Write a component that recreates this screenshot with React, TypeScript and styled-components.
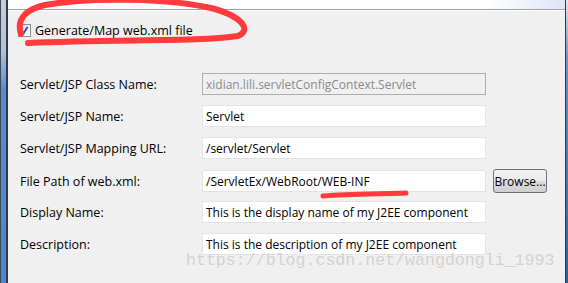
import styled, { createGlobalStyle } from "styled-components";

const Global = createGlobalStyle`
  html, body { margin: 0; padding: 0; background: #f0f0f0; }
  body { width: 568px; height: 283px; overflow: hidden; }
`;

const rows = [
  { label: "Servlet/JSP Class Name:", value: "xidian.lili.servletConfigContext.Servlet", disabled: true },
  { label: "Servlet/JSP Name:", value: "Servlet" },
  { label: "Servlet/JSP Mapping URL:", value: "/servlet/Servlet" },
  { label: "File Path of web.xml:", value: "/ServletEx/WebRoot/WEB-INF", browse: true },
  { label: "Display Name:", value: "This is the display name of my J2EE component" },
  { label: "Description:", value: "This is the description of my J2EE component" },
];

export default function App() {
  return (
    <Window>
      <Global />
      <LeftFrame />
      <Content>
        <TopBand />
        <Panel>
          <CheckRow>
            <CheckBox>
              <svg width="9" height="9" viewBox="0 0 9 9">
                <path d="M1.5 4.5 L3.5 7.5 L7.5 1" stroke="#2b4fa8" strokeWidth="1.8" fill="none" />
              </svg>
            </CheckBox>
            <span>Generate/Map web.xml file</span>
          </CheckRow>
          <Form>
            {rows.map((r) => (
              <Row key={r.label}>
                <Label>{r.label}</Label>
                <Field $disabled={r.disabled}>{r.value}</Field>
                {r.browse ? <Button>Browse...</Button> : <span />}
              </Row>
            ))}
          </Form>
        </Panel>
      </Content>
      <RightFrame />
      <Marks width="568" height="283" viewBox="0 0 568 283">
        <path
          d="M21 34 C17 22 22 10 45 5 C90 -3 170 -2 215 9 C242 17 252 30 238 36 C200 42 120 39 28 43"
          stroke="#ff3b3b"
          strokeWidth="6"
          strokeLinecap="round"
          fill="none"
        />
        <path d="M323 196 C350 194 380 194 406 193" stroke="#ff3b3b" strokeWidth="5" strokeLinecap="round" fill="none" />
      </Marks>
      <Watermark>https://blog.csdn.net/wangdongli_1993</Watermark>
    </Window>
  );
}

const Window = styled.div`
  position: relative;
  display: flex;
  width: 568px;
  height: 283px;
  font-family: "Open Sans", "Noto Sans", sans-serif;
  font-size: 12px;
  color: #000;
`;

const LeftFrame = styled.div`
  width: 8px;
  flex: none;
  box-sizing: border-box;
  border-left: 1px solid #3c4a5e;
  border-right: 2px solid #2a3a52;
  background: linear-gradient(180deg, #c9cdd3 0px, #b8c2cf 50px, #5a8ccb 90px, #4f86c9 283px);
`;

const RightFrame = styled.div`
  width: 3px;
  flex: none;
  box-sizing: border-box;
  border-left: 1px solid #303a48;
  background: linear-gradient(180deg, #dfe6f3 0px, #6b93c6 60px, #2d5f9e 283px);
`;

const Content = styled.div`
  flex: 1;
  min-width: 0;
  display: flex;
  flex-direction: column;
  background: #f0f0f0;
`;

const TopBand = styled.div`
  height: 9px;
  flex: none;
  border-bottom: 1px solid #a0a0a0;
  box-shadow: 0 1px 0 #ffffff;
  background: linear-gradient(90deg, #ffffff 0px, #ffffff 480px, #dde5f6 557px);
`;

const Panel = styled.div`
  padding-left: 12px;
`;

const CheckRow = styled.div`
  display: flex;
  align-items: center;
  gap: 4px;
  height: 22px;
  margin: 9px 0 0 -2px;
  font-size: 12.5px;
`;

const CheckBox = styled.div`
  width: 11px;
  height: 11px;
  border: 1px solid #8e8f8f;
  background: linear-gradient(135deg, #dcdcdc, #ffffff);
  display: flex;
  align-items: center;
  justify-content: center;
`;

const Form = styled.div`
  display: grid;
  row-gap: 10px;
  margin-top: 32px;
`;

const Row = styled.div`
  display: grid;
  grid-template-columns: 182px 284px 61px;
  align-items: center;
  height: 22px;

  & > :nth-child(3) {
    margin-left: 7px;
  }
`;

const Label = styled.div`
  white-space: nowrap;
  font-size: 12.5px;
`;

const Field = styled.div<{ $disabled?: boolean }>`
  box-sizing: border-box;
  height: 22px;
  padding: 0 3px;
  display: flex;
  align-items: center;
  white-space: nowrap;
  overflow: hidden;
  border: 1px solid ${(p) => (p.$disabled ? "#adadad" : "#e3e3e3")};
  background: ${(p) => (p.$disabled ? "#f0f0f0" : "#ffffff")};
  color: ${(p) => (p.$disabled ? "#8a8a8a" : "#000")};
`;

const Button = styled.div`
  box-sizing: border-box;
  height: 24px;
  display: flex;
  align-items: center;
  justify-content: center;
  border: 1px solid #707070;
  border-radius: 3px;
  background: linear-gradient(180deg, #f2f2f2 0%, #ebebeb 50%, #dddddd 51%, #cfcfcf 100%);
`;

const Marks = styled.svg`
  position: absolute;
  left: 0;
  top: 0;
  pointer-events: none;
`;

const Watermark = styled.div`
  position: absolute;
  left: 186px;
  top: 251px;
  font-family: "Liberation Mono", monospace;
  font-size: 16.6px;
  color: rgba(200, 200, 200, 0.75);
  white-space: nowrap;
  pointer-events: none;
`;
